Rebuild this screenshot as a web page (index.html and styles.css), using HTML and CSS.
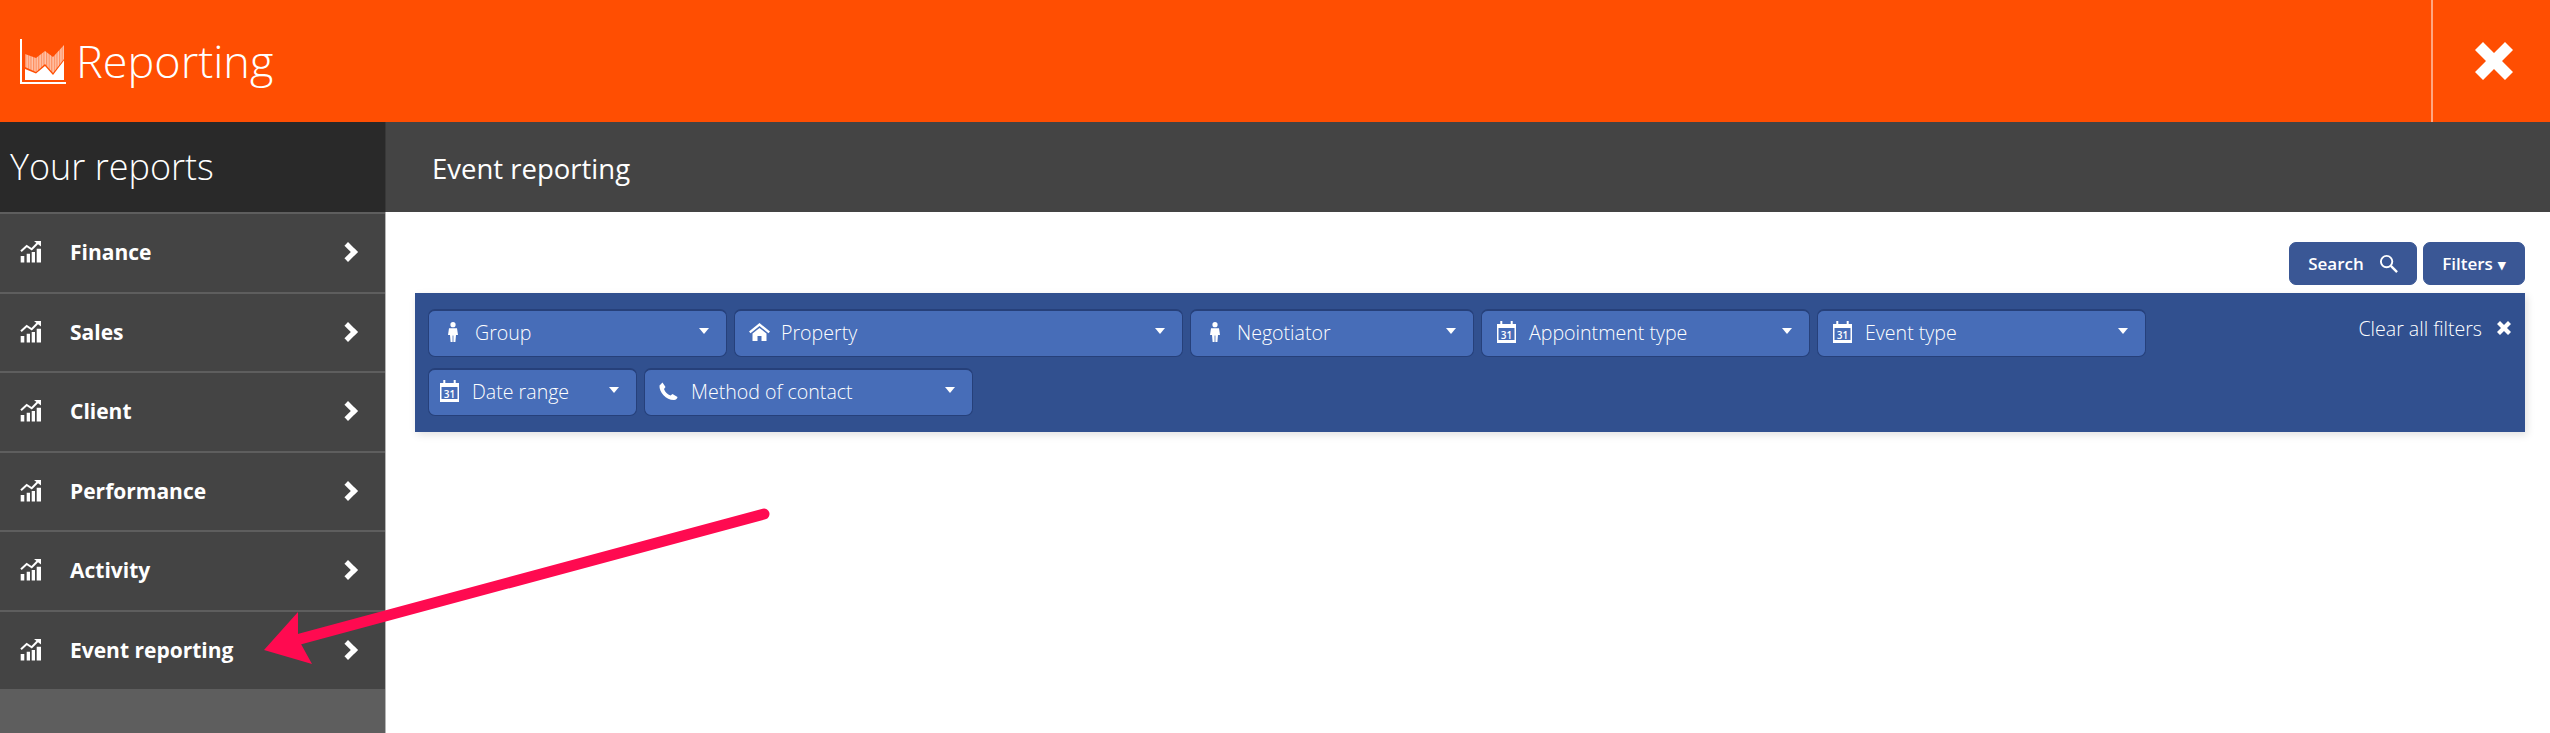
FILE: index.html
```html
<!DOCTYPE html>
<html lang="en">

<head>
    <meta charset="UTF-8">
    <title>Reporting</title>
    <link rel="stylesheet" href="styles.css">
</head>

<body>
    <svg class="icon-defs" width="0" height="0">
        <defs>
            <pattern id="logo-stripes" width="2.600" height="4" patternUnits="userSpaceOnUse">
                <rect width="2.600" height="4" fill="#ffc4ab"/>
                <rect width="1.200" height="4" fill="#ff8d5c"/>
            </pattern>
        </defs>
        <symbol id="i-stats" viewBox="0 0 21 22">
            <path d="M.7 15h3.600v6.500H.7zM6.700 12.700H10v8.800H6.700zM11.700 11H15v10.500h-3.300zM16.700 7.700H21v13.800h-4.300z"/>
            <path d="M1 10.300L6.700 5l5 3.300L18 1.700" fill="none" stroke="currentColor" stroke-width="2"/>
            <path d="M14 0h7v5.500z"/>
        </symbol>
        <symbol id="i-person" viewBox="0 0 10 20">
            <circle cx="5" cy="2.700" r="2.600"/>
            <path d="M1 6.300h8l1 6.700H8l-.6 7H5.400v-6.500h-.8V20H2.600L2 13H0z"/>
        </symbol>
        <symbol id="i-home" viewBox="0 0 21 18">
            <path d="M10.500 0L0 8.500l1.500 1.800L10.500 3l9 7.300L21 8.500z"/>
            <path d="M10.500 5L3.500 10.500V18h5v-5h4v5h5v-7.500z"/>
        </symbol>
        <symbol id="i-cal" viewBox="0 0 19 22">
            <path fill-rule="evenodd" d="M3.300 0h2v3h8.400V0h2v3H19v19H0V3h3.300zM1.500 7v12h16V7z"/>
        </symbol>
        <symbol id="i-phone" viewBox="0 0 19 18">
            <path d="M3.500.5L6.500 5 5 7c1 3 3.500 5.500 6.500 6.500l2-1.500 5 3c0 1-1.500 3-3.500 3C7 18 0 10 .5 3.500z"/>
        </symbol>
    </svg>

    <header class="top-bar">
        <div class="top-title">
            <svg class="top-logo" viewBox="0 0 46 46" width="46" height="46">
                <path d="M0 0h2v43h44v2H0z" fill="#fff"/>
                <path d="M5 15l11 4 9-7 8 6 11-12v14l-11 14-8-9-9 8-11-5z" fill="url(#logo-stripes)"/>
                <path d="M5 30l11 4.500 9-7.500 8 9 11-14.500V41H5z" fill="#fff"/>
            </svg>
            <h1>Reporting</h1>
        </div>
        <button class="top-close" type="button">
            <svg viewBox="0 0 38 38" width="38" height="38"><path d="M8 0l11 11L30 0l8 8-11 11 11 11-8 8-11-11L8 38l-8-8 11-11L0 8z" fill="#fff"/></svg>
        </button>
    </header>

    <div class="main">
        <aside class="sidebar">
            <h2 class="sidebar-title">Your reports</h2>
            <ul class="report-list">
                <li class="report-item"><svg class="report-icon"><use href="#i-stats"/></svg><span>Finance</span><i class="chevron"></i></li>
                <li class="report-item"><svg class="report-icon"><use href="#i-stats"/></svg><span>Sales</span><i class="chevron"></i></li>
                <li class="report-item"><svg class="report-icon"><use href="#i-stats"/></svg><span>Client</span><i class="chevron"></i></li>
                <li class="report-item"><svg class="report-icon"><use href="#i-stats"/></svg><span>Performance</span><i class="chevron"></i></li>
                <li class="report-item"><svg class="report-icon"><use href="#i-stats"/></svg><span>Activity</span><i class="chevron"></i></li>
                <li class="report-item"><svg class="report-icon"><use href="#i-stats"/></svg><span>Event reporting</span><i class="chevron"></i></li>
            </ul>
        </aside>

        <section class="content">
            <h2 class="content-title">Event reporting</h2>
            <div class="toolbar">
                <button class="tool-btn tool-search" type="button">Search
                    <svg viewBox="0 0 20 20" width="19" height="19"><circle cx="8" cy="8" r="6" fill="none" stroke="#fff" stroke-width="2"/><path d="M12.500 12.500L19 19" stroke="#fff" stroke-width="2.500"/></svg>
                </button>
                <button class="tool-btn tool-filters" type="button">Filters <span class="tool-caret">▾</span></button>
            </div>
            <div class="filter-panel">
                <div class="filter-list">
                    <div class="filter w-group"><svg class="filter-icon icon-person"><use href="#i-person"/></svg><span>Group</span></div>
                    <div class="filter w-property"><svg class="filter-icon icon-home"><use href="#i-home"/></svg><span>Property</span></div>
                    <div class="filter w-negotiator"><svg class="filter-icon icon-person"><use href="#i-person"/></svg><span>Negotiator</span></div>
                    <div class="filter w-type"><svg class="filter-icon icon-cal" viewBox="0 0 19 22"><use href="#i-cal"/><text x="9.500" y="17.600" text-anchor="middle" class="cal-day">31</text></svg><span>Appointment type</span></div>
                    <div class="filter w-type"><svg class="filter-icon icon-cal" viewBox="0 0 19 22"><use href="#i-cal"/><text x="9.500" y="17.600" text-anchor="middle" class="cal-day">31</text></svg><span>Event type</span></div>
                    <div class="filter w-date"><svg class="filter-icon icon-cal" viewBox="0 0 19 22"><use href="#i-cal"/><text x="9.500" y="17.600" text-anchor="middle" class="cal-day">31</text></svg><span>Date range</span></div>
                    <div class="filter w-type"><svg class="filter-icon icon-phone"><use href="#i-phone"/></svg><span>Method of contact</span></div>
                </div>
                <a class="clear-filters">Clear all filters
                    <svg viewBox="0 0 14 14" width="14" height="14"><path d="M3 0l4 4 4-4 3 3-4 4 4 4-3 3-4-4-4 4-3-3 4-4-4-4z" fill="#fff"/></svg>
                </a>
            </div>
        </section>
    </div>

    <!-- annotation drawn on top of the screenshot -->
    <svg class="annotation" viewBox="0 0 2550 733">
        <path d="M764 514L300 639" fill="none" stroke="#ff0a50" stroke-width="11" stroke-linecap="round"/>
        <path d="M264 650L298 612 298 635 301 644 312 664z" fill="#ff0a50"/>
    </svg>
</body>

</html>
```

FILE: styles.css
```css
* {
  box-sizing: border-box;
}
html, body {
  margin: 0;
  padding: 0;
  height: 100%;
}
body {
  display: flex;
  flex-direction: column;
  position: relative;
  overflow: hidden;
  background: #ffffff;
  color: #ffffff;
  font-family: "Open Sans", "Liberation Sans", sans-serif;
}
.icon-defs {
  position: absolute;
}
svg {
  fill: currentColor;
}

.top-bar {
  flex: 0 0 122px;
  display: flex;
  align-items: stretch;
  justify-content: space-between;
  background: #ff4e02;
}
.top-title {
  display: flex;
  align-items: center;
  padding-left: 20px;
}
.top-logo {
  margin: 2px 10px 0 0;
}
.top-title h1 {
  margin: 0 0 2px;
  font-size: 45px;
  font-weight: 300;
  line-height: 1;
}
.top-close {
  width: 119px;
  border: 0;
  border-left: 2px solid #ffa680;
  background: none;
  padding: 0 0 0 4px;
  display: flex;
  align-items: center;
  justify-content: center;
}

.main {
  flex: 1;
  display: flex;
  min-height: 0;
}
.sidebar {
  flex: 0 0 386px;
  display: flex;
  flex-direction: column;
  background: #5e5e5e;
}
.sidebar-title {
  margin: 0;
  height: 90px;
  padding: 0 0 2px 10px;
  display: flex;
  align-items: center;
  background: #292929;
  border-right: 1px solid #383838;
  font-size: 36px;
  font-weight: 300;
}
.report-list {
  flex: 1;
  margin: 0;
  padding: 0;
  list-style: none;
  border-right: 1px solid #b5b5b5;
}
.report-item {
  height: 79.5px;
  display: flex;
  align-items: center;
  padding: 0 25px 1px 20px;
  background: #444444;
  border-top: 2px solid #5e5e5e;
  font-size: 21px;
  font-weight: 700;
}
.report-icon {
  width: 21px;
  height: 22px;
  margin-right: 29px;
}
.report-item span {
  flex: 1;
}
.chevron {
  width: 14px;
  height: 14px;
  margin-right: 5px;
  border-top: 5px solid #ffffff;
  border-right: 5px solid #ffffff;
  transform: rotate(45deg);
}

.content {
  flex: 1;
  min-width: 0;
}
.content-title {
  margin: 0;
  height: 90px;
  padding: 2px 0 0 46px;
  display: flex;
  align-items: center;
  background: #444444;
  font-size: 27.5px;
  font-weight: 400;
}
.toolbar {
  display: flex;
  justify-content: flex-end;
  gap: 6px;
  padding: 30px 25px 8px 0;
}
.tool-btn {
  height: 43px;
  display: flex;
  align-items: center;
  justify-content: center;
  border: 1px solid #3a5795;
  border-radius: 7px;
  background: #3a5795;
  color: #ffffff;
  font-family: inherit;
  font-size: 17px;
  font-weight: 600;
  padding: 0;
}
.tool-search {
  width: 128px;
  gap: 15px;
}
.tool-filters {
  width: 102px;
  gap: 5px;
}
.tool-caret {
  font-size: 15px;
}

.filter-panel {
  margin: 0 25px 0 29px;
  height: 139px;
  padding: 16px 14px 0 13px;
  display: flex;
  justify-content: space-between;
  background: #31508f;
  box-shadow: 2px 3px 8px rgba(0, 0, 0, 0.12);
}
.filter-list {
  display: flex;
  flex-wrap: wrap;
  align-content: flex-start;
  gap: 11px 7px;
  width: 1720px;
}
.filter {
  height: 48px;
  display: flex;
  align-items: center;
  position: relative;
  padding-bottom: 3px;
  background: #476db8;
  border: 1px solid #26407a;
  border-top-width: 2px;
  border-radius: 7px;
  font-size: 19.6px;
  font-weight: 300;
}
.filter::after {
  content: "";
  position: absolute;
  right: 17px;
  top: 17px;
  border-left: 5px solid transparent;
  border-right: 5px solid transparent;
  border-top: 6px solid #ffffff;
}
.w-group { width: 299px; }
.w-property { width: 449px; }
.w-negotiator { width: 284px; }
.w-type { width: 329px; }
.w-date { width: 209px; }
.filter-icon {
  flex: none;
}
.icon-person {
  width: 10px;
  height: 20px;
  margin: 0 17px 0 19px;
}
.icon-home {
  width: 21px;
  height: 18px;
  margin: 0 11px 0 14px;
}
.icon-cal {
  width: 19px;
  height: 22px;
  margin: 0 13px 0 15px;
}
.w-date .icon-cal {
  margin-left: 11px;
}
.cal-day {
  font-family: "Open Sans", sans-serif;
  font-size: 10px;
  font-weight: 600;
}
.icon-phone {
  width: 19px;
  height: 18px;
  margin: 0 13px 0 14px;
}
.clear-filters {
  display: flex;
  align-items: center;
  gap: 15px;
  height: 24px;
  margin-top: 7px;
  font-size: 19.6px;
  font-weight: 300;
}

.annotation {
  position: absolute;
  left: 0;
  top: 0;
  width: 2550px;
  height: 733px;
  pointer-events: none;
}
```
